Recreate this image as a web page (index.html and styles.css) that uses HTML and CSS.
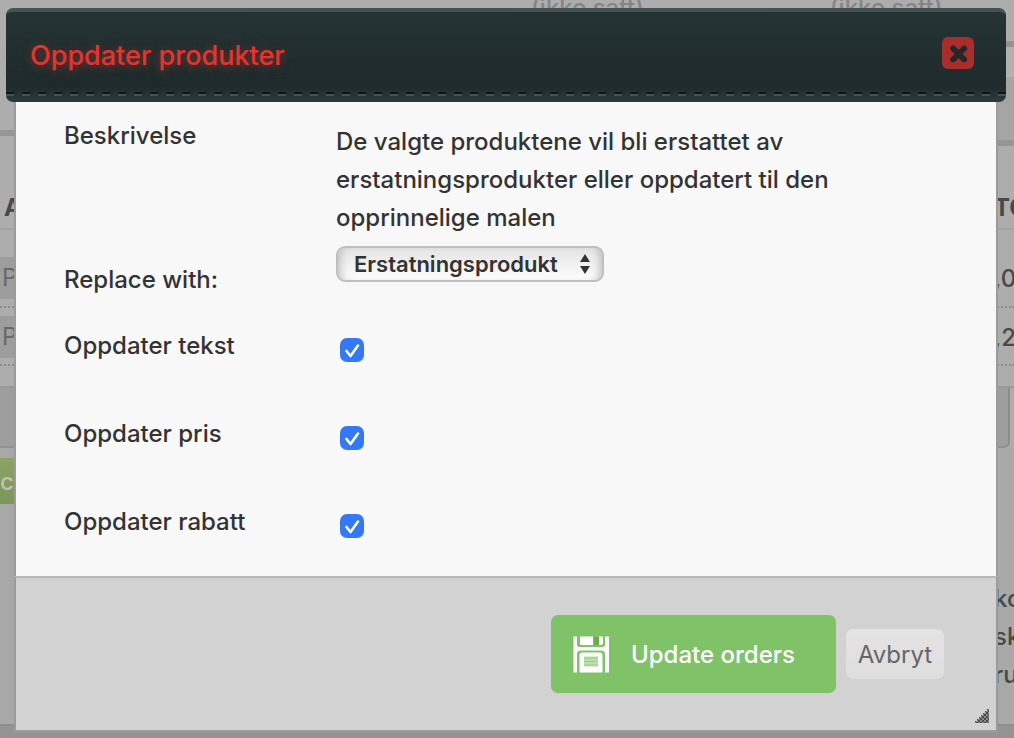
FILE: index.html
```html
<!DOCTYPE html>
<html lang="no">
<head>
<meta charset="utf-8">
<meta name="viewport" content="width=device-width, initial-scale=1">
<title>Oppdater produkter</title>
<link rel="stylesheet" href="styles.css">
</head>
<body>
<div class="page" aria-hidden="true">
  <div class="col col-left">
    <div class="panel-end panel-end-left"></div>
    <div class="head-cell"><span>A</span></div>
    <div class="line-cell first"><span class="field">P</span></div>
    <div class="line-cell"><span class="field">P</span></div>
    <div class="gap-cell"></div>
    <div class="sum-cell"></div>
    <div class="action-cell"><span class="tag">cc</span></div>
  </div>
  <div class="col col-mid"><span>(ikke satt)</span><span>(ikke satt)</span></div>
  <div class="col col-right">
    <div class="panel-top"></div>
    <div class="panel-end panel-end-right"></div>
    <div class="head-cell"><span>TO</span></div>
    <div class="line-cell first"><span>,0</span></div>
    <div class="line-cell"><span>,2</span></div>
    <div class="gap-cell"></div>
    <div class="sum-cell"></div>
    <div class="note-cell">ko<br>sk<br>ru</div>
  </div>
</div>

<form class="dialog" role="dialog" aria-labelledby="dialog-title">
  <header class="dialog-header">
    <h1 class="dialog-title" id="dialog-title">Oppdater produkter</h1>
    <button class="close" type="button" aria-label="Lukk">
      <svg viewBox="0 0 32 32" width="32" height="32"><path d="M11.200 11.500 22.200 22.500M22.200 11.500 11.200 22.500" stroke="#252628" stroke-width="5.800" stroke-linecap="round"/></svg>
    </button>
  </header>
  <div class="dialog-body">
    <div class="row row-text">
      <span class="label">Beskrivelse</span>
      <p class="description">De valgte produktene vil bli erstattet av erstatningsprodukter eller oppdatert til den opprinnelige malen</p>
    </div>
    <div class="row row-select">
      <label class="label" for="replace">Replace with:</label>
      <select class="select" id="replace"><option>Erstatningsprodukt</option></select>
    </div>
    <div class="row row-check">
      <label class="label" for="tekst">Oppdater tekst</label>
      <input class="check" type="checkbox" id="tekst" checked>
    </div>
    <div class="row row-check">
      <label class="label" for="pris">Oppdater pris</label>
      <input class="check" type="checkbox" id="pris" checked>
    </div>
    <div class="row row-check">
      <label class="label" for="rabatt">Oppdater rabatt</label>
      <input class="check" type="checkbox" id="rabatt" checked>
    </div>
  </div>
  <footer class="dialog-footer">
    <button class="update" type="submit">
      <svg viewBox="0 0 38 38" width="38" height="38">
        <path fill="#fff" d="M1.500 1.500h3.500v8q0 2.500 2.500 2.500h23q2.500 0 2.500-2.500v-8h4v36h-4V19q0-3.500-3.500-3.500h-21Q5 15.500 5 19v18.500H1.500z"/>
        <path fill="#fff" d="M8 1.500h13V10H9.500Q8 10 8 8.500zM27 1.500h4V8q0 2-2 2h-2z"/>
        <path fill="#65ac4d" d="M22 2h5v8h-5z"/>
        <path fill="#fff" d="M7.500 37.500V20q0-2.500 2.500-2.500h18q2.500 0 2.500 2.500v17.500z"/>
        <path fill="#b9dfab" d="M12 21.500h14v10H12z"/>
        <path stroke="#98cf86" d="M12 23h14M12 26.500h14M12 30h14"/>
      </svg>
      Update orders
    </button>
    <button class="cancel" type="button">Avbryt</button>
    <svg class="grip" viewBox="0 0 16 16" width="16" height="16">
      <defs><pattern id="mesh" width="4" height="4" patternUnits="userSpaceOnUse"><path fill="#8a8a8a" d="M0 0h4v4H0z"/><path fill="#4c4c4c" d="M0 0h2v2H0zM2 2h2v2H2z"/></pattern></defs>
      <path fill="url(#mesh)" d="M13 1h2v14H1v-2h2v-2h2V9h2V7h2V5h2V3h2z"/>
    </svg>
  </footer>
</form>
</body>
</html>
```
FILE: styles.css
```css
* { box-sizing: border-box; }

body {
  margin: 0;
  min-height: 100vh;
  background: #949494;
  color: #333;
  font-family: Inter, "Liberation Sans", sans-serif;
  font-size: 24px;
  font-weight: 500;
}

button, select { font: inherit; }

/* Dimmed order page */
.page {
  display: flex;
  height: 726px;
  overflow: hidden;
  background: #adadad;
  border-bottom: 2px solid #8d8d8d;
  color: #484848;
}
.col { overflow: hidden; }
.col-left { flex: none; width: 14px; }
.col-right { flex: none; width: 20px; }
.col-mid {
  display: flex;
  flex: 1;
  gap: 186px;
  min-width: 0;
  padding-left: 517px;
  line-height: 16px;
  white-space: nowrap;
  color: #858585;
}
.panel-top {
  height: 47px;
  border-bottom: 6px solid #929292;
}
.panel-end { border-bottom: 6px solid #969696; }
.panel-end-left { height: 136px; }
.panel-end-right {
  height: 99px;
  background: linear-gradient(#b1b1b1 30px, #a5a5a5 30px);
}
.head-cell {
  display: flex;
  align-items: flex-end;
  height: 94px;
  padding: 0 0 6px 4px;
  border-bottom: 2px solid #a3a3a3;
  font-weight: 700;
}
.col-right .head-cell { height: 84px; padding-left: 0; }
.line-cell {
  display: flex;
  align-items: center;
  height: 58px;
  padding: 8px 0 6px;
  border-bottom: 2px dotted #8d8d8d;
}
.line-cell.first { height: 78px; padding-top: 26px; }
.field {
  width: 100%;
  height: 42px;
  padding-left: 2px;
  background: #9d9d9d;
  color: #696969;
  font-weight: 400;
  line-height: 42px;
}
.gap-cell { height: 22px; border-bottom: 2px solid #999; }
.sum-cell {
  height: 60px;
  background: #9e9e9e;
  border-bottom: 2px solid #929292;
}
.col-right .sum-cell {
  width: 16px;
  border-right: 2px solid #8d8d8d;
  border-radius: 0 0 6px 0;
}
.action-cell { padding-top: 10px; background: #a8a8a8; height: 278px; }
.tag {
  display: block;
  height: 46px;
  background: linear-gradient(#8ba362, #7d965a);
  color: #c0c0c0;
  line-height: 48px;
}
.note-cell {
  height: 278px;
  padding-top: 132px;
  background: #a9a9a9;
  line-height: 38px;
}

/* Dialog */
.dialog {
  position: absolute;
  top: 8px;
  left: 6px;
  right: 8px;
}
.dialog-header {
  display: flex;
  align-items: center;
  justify-content: space-between;
  height: 94px;
  padding: 0 32px 8px 24px;
  border-top: 4px solid #465252;
  border-radius: 7px;
  background:
    repeating-linear-gradient(90deg, #101617 0 8px, transparent 8px 16px) 0 80px / 100% 2px no-repeat,
    repeating-linear-gradient(90deg, #465152 0 8px, transparent 8px 16px) 0 82px / 100% 2px no-repeat,
    linear-gradient(#263334 0, #1e2a2b 74px, #2c3b3c 100%);
}
.dialog-title {
  margin: 0;
  padding-top: 4px;
  color: #e3342f;
  font-size: 27px;
  font-weight: 500;
  text-shadow: 0 2px 8px rgba(227, 52, 47, .5);
}
.close {
  width: 32px;
  height: 32px;
  padding: 0;
  border: 0;
  border-radius: 6px;
  background: #a82d2b;
}
.close svg { display: block; }
.dialog-body {
  margin: 0 8px;
  padding: 14px 48px 0;
  border: solid #9b9b9b;
  border-width: 0 2px;
  background: #f8f8f8;
}
.row {
  display: grid;
  grid-template-columns: 272px minmax(0, 520px);
  align-items: start;
}
.label { line-height: 40px; }
.row-text { height: 130px; }
.description { margin: 7px 0 0; line-height: 38px; }
.row-select { height: 80px; }
.row-select .label { padding-top: 14px; }
.row-check { height: 88px; }
.row-check:last-child { height: 74px; }
.select {
  width: 268px;
  height: 36px;
  padding: 0 16px;
  appearance: none;
  border: 2px solid #bfbfbf;
  border-radius: 9px;
  background:
    url("data:image/svg+xml,%3Csvg xmlns='http://www.w3.org/2000/svg' viewBox='0 0 10 20'%3E%3Cpath fill='%23333' d='M5 0l5 8H0zM5 20l5-8H0z'/%3E%3C/svg%3E") right 12px center / 10px 20px no-repeat,
    linear-gradient(#e4e4e4, #fdfdfd);
  box-shadow: inset 8px 0 8px -6px #bbb, inset -8px 0 8px -6px #bbb;
  color: #333;
  font-size: 22px;
  font-weight: 600;
}
.check {
  width: 24px;
  height: 24px;
  margin: 12px 4px 0;
  appearance: none;
  border-radius: 7px;
  background: #3478f6;
}
.check:checked {
  background: #3478f6 url("data:image/svg+xml,%3Csvg xmlns='http://www.w3.org/2000/svg' viewBox='0 0 24 24'%3E%3Cpath fill='none' stroke='%23fff' stroke-width='2.600' stroke-linecap='round' stroke-linejoin='round' d='M6.500 13l4 5L18 7.500'/%3E%3C/svg%3E");
}
.dialog-footer {
  position: relative;
  display: flex;
  align-items: center;
  justify-content: flex-end;
  gap: 10px;
  height: 156px;
  margin: 0 8px;
  padding: 0 52px 0 0;
  border: 2px solid #9b9b9b;
  border-top-color: #b9b9b9;
  background: #d2d2d2;
}
.update {
  display: flex;
  align-items: center;
  gap: 21px;
  width: 285px;
  height: 78px;
  padding: 0 21px;
  border: 0;
  border-radius: 7px;
  background: #7fc268;
  color: #fff;
}
.cancel {
  width: 98px;
  height: 50px;
  padding: 0;
  border: 0;
  border-radius: 7px;
  background: linear-gradient(#e5e3e4, #dedede);
  color: #666;
  font-weight: 400;
}
.grip {
  position: absolute;
  right: 6px;
  bottom: 6px;
}
```
